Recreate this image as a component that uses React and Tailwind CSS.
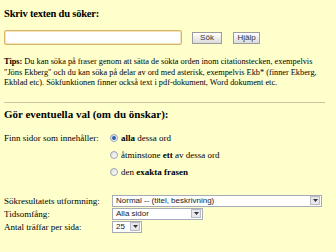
import React from 'react';

const sans = "font-['Liberation_Sans',Arial,sans-serif]";

function Radio({ checked }) {
  return (
    <span className="inline-flex h-[8px] w-[8px] shrink-0 items-center justify-center rounded-full border border-[#9aa3b3] bg-gradient-to-br from-[#dcdcdc] to-white">
      {checked && <span className="h-[4px] w-[4px] rounded-full bg-[#2f5fb5]" />}
    </span>
  );
}

function Select({ value, width }) {
  return (
    <div className={`flex h-[12px] items-center justify-between border border-[#a5acb5] bg-white pl-[3px] pr-[1px] ${width}`}>
      <span className={`${sans} text-[8px] leading-none text-[#222]`}>{value}</span>
      <span className="flex h-[9px] w-[10px] items-center justify-center border border-[#b8bcc4] bg-[#e8e8ec]">
        <svg width="5" height="3" viewBox="0 0 5 3"><path d="M0 0h5L2.5 3z" fill="#333" /></svg>
      </span>
    </div>
  );
}

export default function App() {
  return (
    <div
      className="h-[252px] w-[336px] overflow-hidden bg-[#ffffcc] px-[4px] text-black"
      style={{ fontFamily: "'Liberation Serif', 'Times New Roman', serif" }}
    >
      <h2 className="pt-[7px] text-[10.5px] font-bold leading-[13px] tracking-[-0.2px]">Skriv texten du söker:</h2>

      <div className="mt-[10px] flex items-center">
        <div className="h-[15px] w-[178px] rounded-[2px] border border-[#d8b56a] bg-white shadow-[inset_0_0_0_1px_#f3e3b8]" />
        <button className={`ml-[10px] h-[12px] w-[30px] border border-[#9c9c9c] bg-gradient-to-b from-white to-[#dcdcdc] ${sans} text-[8px] leading-none text-[#333]`}>Sök</button>
        <button className={`ml-[11px] h-[12px] w-[27px] border border-[#9c9c9c] bg-gradient-to-b from-white to-[#dcdcdc] ${sans} text-[8px] leading-none text-[#333]`}>Hjälp</button>
      </div>

      <p className="mt-[12px] whitespace-nowrap text-[8.3px] leading-[10.5px]">
        <b>Tips:</b> Du kan söka på fraser genom att sätta de sökta orden inom citationstecken, exempelvis
        <br />"Jöns Ekberg" och du kan söka på delar av ord med asterisk, exempelvis Ekb* (finner Ekberg,
        <br />Ekblad etc). Sökfunktionen finner också text i pdf-dokument, Word dokument etc.
      </p>

      <hr className="mt-[13px] w-[321px] border-t border-[#c8c4a4]" />

      <h2 className="mt-[5px] text-[11px] font-bold leading-[13px]">Gör eventuella val (om du önskar):</h2>

      <div className="mt-[11px] flex">
        <div className="w-[106px] text-[9px] leading-[12px]">Finn sidor som innehåller:</div>
        <div className="flex flex-col gap-[5px] text-[9px] leading-[12px]">
          <label className="flex items-center gap-[3px]"><Radio checked /><span><b>alla</b> dessa ord</span></label>
          <label className="flex items-center gap-[3px]"><Radio /><span>åtminstone <b>ett</b> av dessa ord</span></label>
          <label className="flex items-center gap-[3px]"><Radio /><span>den <b>exakta frasen</b></span></label>
        </div>
      </div>

      <div className="mt-[17px] grid grid-cols-[108px_1fr] items-center gap-y-[1px] text-[9px] leading-[12px]">
        <span>Sökresultatets utformning:</span>
        <Select value="Normal -- (titel, beskrivning)" width="w-[210px]" />
        <span>Tidsomfång:</span>
        <Select value="Alla sidor" width="w-[91px]" />
        <span>Antal träffar per sida:</span>
        <Select value="25" width="w-[30px]" />
      </div>
    </div>
  );
}
